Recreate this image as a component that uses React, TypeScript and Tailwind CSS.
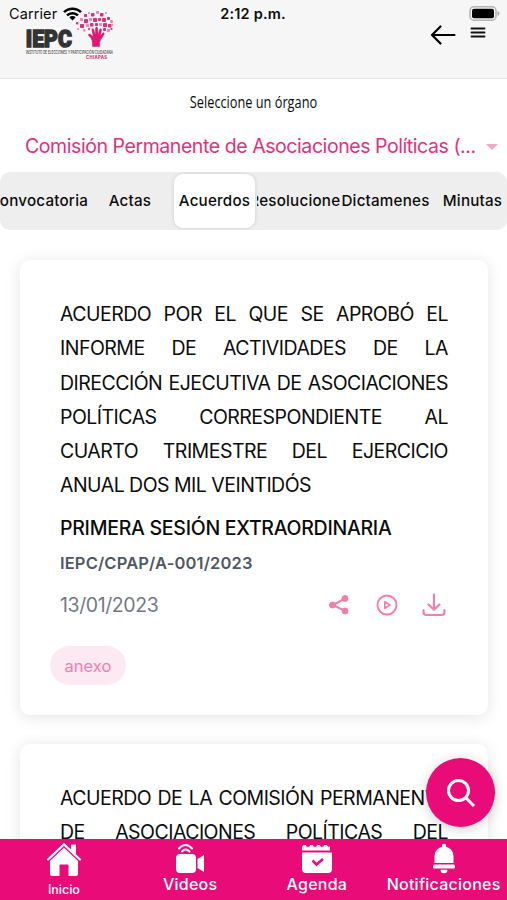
import type { ReactNode } from 'react'

const TABS = [
  { label: 'Convocatoria', className: 'justify-end' },
  { label: 'Actas', className: 'justify-center' },
  { label: 'Acuerdos', className: 'justify-center mx-[2px] rounded-[9px] bg-white shadow-[0_0_4px_rgba(0,0,0,0.14)]' },
  { label: 'Resoluciones', className: 'justify-center overflow-hidden' },
  { label: 'Dictamenes', className: 'justify-center' },
  { label: 'Minutas', className: 'justify-center' },
]

// Dots of the tree in the logo: x, y, size, light
const LEAVES: [number, number, number, boolean][] = [
  [8, 3, 3, false], [12, 1, 2, true], [15, 2, 3.5, false], [20, 0, 3, true], [24, 2, 3.5, false],
  [29, 1, 2, true], [4, 7, 3, true], [8, 8, 4, false], [13, 7, 3, true], [17, 7, 4, false],
  [22, 7, 3, false], [26, 7, 4, false], [31, 6, 3, false], [34, 9, 3, true], [0, 11, 2.5, false],
  [4, 13, 4, false], [10, 13, 3, true], [14, 12, 3.5, false], [19, 12, 3, false], [23, 12, 3, true],
  [27, 12, 4, false], [32, 13, 3.5, false], [35.5, 13, 1.8, true], [1, 17, 2, true], [7, 18, 2.5, true],
  [27, 17, 3, false], [31, 18, 3, true], [34.5, 17, 2, false], [12, 17, 2, false],
]

function Logo() {
  return (
    <svg width="92" height="50" viewBox="0 0 92 50" aria-label="IEPC Chiapas">
      <text x="1.800" y="36.800" fontFamily="Roboto, sans-serif" fontWeight="900" fontSize="24.500" textLength="46" lengthAdjust="spacingAndGlyphs" fill="#333" stroke="#333" strokeWidth="1.500">IEPC</text>
      <g transform="translate(52 1)">
        {LEAVES.map(([x, y, s, light], i) => (
          <rect key={i} x={x} y={y} width={s} height={s} rx="0.7" fill={light ? '#ee85b2' : '#dc3078'} />
        ))}
        <path d="M16.500 35.500c.3-5-.5-8-3.700-10.700-1.200-1.200.3-2.300 1.500-1.500l3 2.200-1.400-6.500c-.2-1.500 1.500-1.700 1.900-.3l1.600 5.400.2-7c.1-1.400 1.900-1.400 2 0l.5 6.900 1.500-5.500c.4-1.300 2-1 1.800.4l-.9 6.200 2-2.800c.9-1.100 2.200-.3 1.600.9-1.600 3.600-4.600 5.800-4.500 9.300v3z" fill="#dd1971" stroke="#dd1971" strokeWidth="0.500" />
      </g>
      <text x="2" y="43.500" fontFamily="Inter, sans-serif" fontSize="4.200" fontWeight="500" textLength="87" lengthAdjust="spacingAndGlyphs" fill="#444">INSTITUTO DE ELECCIONES Y PARTICIPACIÓN CIUDADANA</text>
      <text x="62" y="49" fontFamily="Inter, sans-serif" fontSize="4.200" fontWeight="800" textLength="21" fill="#dc3078">CHIAPAS</text>
    </svg>
  )
}

function Header() {
  return (
    <header className="h-[79px] shrink-0 border-b border-[#e4e4e4] bg-[#f6f6f6]">
      <div className="grid h-[27px] grid-cols-3 items-center pl-[9px] pr-[7px] text-[14.500px]">
        <div className="flex items-center gap-[6px] tracking-[0.1px]">
          Carrier
          <svg width="19" height="14" viewBox="0 0 19 14" fill="none" stroke="#000" strokeWidth="2.500">
            <path d="M1 5.200a12 12 0 0 1 17 0M4 8.400a7.800 7.800 0 0 1 11 0" />
            <path d="M9.500 13.500 6.300 10.300a4.600 4.600 0 0 1 6.400 0z" fill="#000" stroke="none" />
          </svg>
        </div>
        <span className="-ml-[3px] text-center font-semibold tracking-[0.2px]">2:12 p.m.</span>
        <svg className="justify-self-end" width="31" height="15" viewBox="0 0 31 15">
          <rect x="1" y="0.800" width="26" height="13.400" rx="4" fill="#f6f6f6" stroke="#b4b4b4" strokeWidth="1.600" />
          <rect x="3" y="2.800" width="22" height="9.400" rx="2" />
          <path d="M28.500 5v5c2.600-1 2.600-4 0-5z" fill="#aaa" />
        </svg>
      </div>
      <div className="-mt-[17px] flex items-start justify-between pl-6 pr-[21px]">
        <Logo />
        <div className="mt-[15px] flex items-start gap-[14px]">
          <svg width="26" height="20" viewBox="0 0 26 20" fill="none" stroke="#000" strokeWidth="2.200" strokeLinecap="round" strokeLinejoin="round">
            <path d="M24.500 10H2M10.500 1.500 2 10l8.500 8.500" />
          </svg>
          <svg width="16" height="14" viewBox="0 0 16 14" stroke="#111" strokeWidth="1.900" strokeLinecap="round">
            <path d="M1.500 3.500h13M1.500 7.500h13M1.500 11.500h13" />
          </svg>
        </div>
      </div>
    </header>
  )
}

function ShareIcon() {
  return (
    <svg width="22" height="22" viewBox="0 0 22 22" fill="#f17fae" stroke="#f17fae">
      <path d="M17 4.500 5 11l12 6" fill="none" strokeWidth="2" />
      <circle cx="17" cy="4.500" r="3" />
      <circle cx="4.500" cy="11" r="3" />
      <circle cx="17" cy="17" r="3" />
    </svg>
  )
}

function PlayIcon() {
  return (
    <svg width="22" height="22" viewBox="0 0 22 22" fill="none" stroke="#f17fae" strokeWidth="1.900" strokeLinejoin="round">
      <circle cx="11" cy="11" r="9.500" />
      <path d="M8.800 7.800v6.400L14 11z" strokeWidth="1.600" />
    </svg>
  )
}

function DownloadIcon() {
  return (
    <svg width="24" height="24" viewBox="0 0 24 24" fill="none" stroke="#f17fae" strokeWidth="2.200" strokeLinecap="round" strokeLinejoin="round">
      <path d="M12 1.500v15M6.500 11.500l5.500 5.300 5.500-5.300M1.500 17v2a3 3 0 0 0 3 3h15a3 3 0 0 0 3-3v-2" />
    </svg>
  )
}

function Card({ children }: { children: ReactNode }) {
  return (
    <article className="h-[455px] shrink-0 rounded-[10px] bg-white px-10 pt-[37px] shadow-[0_2px_16px_rgba(0,0,0,0.11)]">
      {children}
    </article>
  )
}

function NavItem({ label, small, children }: { label: string; small?: boolean; children: ReactNode }) {
  return (
    <div className={`flex flex-col items-center pt-1 ${small ? 'pl-px' : ''}`}>
      {children}
      <span className={small ? 'mt-[5px] text-[12.500px] leading-4 font-medium' : 'text-[16px] leading-[20px] font-medium tracking-[0.25px]'}>
        {label}
      </span>
    </div>
  )
}

export default function App() {
  return (
    <div className="relative flex h-[900px] w-[507px] flex-col overflow-hidden bg-white font-[Inter,sans-serif] text-[#0c0c0c]">
      <Header />

      <main className="flex min-h-0 flex-1 flex-col overflow-hidden">
        {/* Organ selector */}
        <p className="mt-[11px] h-6 scale-x-[0.75] text-center font-['Open_Sans',sans-serif] text-[17px] leading-6 font-medium whitespace-nowrap">
          Seleccione un órgano
        </p>
        <div className="mt-[18px] flex h-[30px] items-center justify-between pl-[25px] pr-[9px] text-[#e0317d]">
          <span className="text-[19.500px] tracking-[-0.430px] whitespace-nowrap">Comisión Permanente de Asociaciones Políticas (...</span>
          <svg width="12" height="6" viewBox="0 0 12 6" fill="#f3a6c6">
            <path d="M0 0h12L6 6z" />
          </svg>
        </div>

        {/* Tabs */}
        <div className="mt-[11px] flex h-[58px] shrink-0 overflow-hidden rounded-[10px] bg-[#eee]">
          <div className="my-0.5 grid w-[515px] shrink-0 grid-cols-[88px_84px_85px_84px_89px_85px]">
            {TABS.map(tab => (
              <div
                key={tab.label}
                className={`flex items-center text-[15.200px] font-medium tracking-[0.2px] whitespace-nowrap ${tab.className}`}
              >
                {tab.label}
              </div>
            ))}
          </div>
        </div>

        {/* Agreements */}
        <div className="flex flex-col gap-[29px] px-5 pt-[30px] pr-[19px]">
          <Card>
            <p className="text-justify text-[19.500px] leading-[34.200px] tracking-[-0.520px]">
              ACUERDO POR EL QUE SE APROBÓ EL INFORME DE ACTIVIDADES DE LA DIRECCIÓN EJECUTIVA DE ASOCIACIONES POLÍTICAS CORRESPONDIENTE AL CUARTO TRIMESTRE DEL EJERCICIO ANUAL DOS MIL VEINTIDÓS
            </p>
            <h2 className="mt-[11px] text-[19.500px] leading-[30px] font-medium tracking-[-0.270px] whitespace-nowrap">PRIMERA SESIÓN EXTRAORDINARIA</h2>
            <p className="mt-2 text-[16.500px] leading-6 font-semibold tracking-[0.150px] text-[#4f5865]">IEPC/CPAP/A-001/2023</p>
            <div className="mt-[15px] flex h-[30px] items-center justify-between pr-[2px]">
              <span className="text-[19.500px] tracking-[-0.400px] text-[#737984]">13/01/2023</span>
              <div className="flex items-center">
                <ShareIcon />
                <span className="ml-[26px] mr-6">
                  <PlayIcon />
                </span>
                <DownloadIcon />
              </div>
            </div>
            <span className="-ml-[10px] mt-[26px] flex h-[39px] w-[76px] items-center justify-center rounded-full bg-[#fde9f2] text-[16.500px] text-[#f17fae]">
              anexo
            </span>
          </Card>
          <Card>
            <p className="text-justify text-[19.500px] leading-[34.200px] tracking-[-0.520px]">
              ACUERDO DE LA COMISIÓN PERMANENTE DE ASOCIACIONES POLÍTICAS DEL INSTITUTO DE ELECCIONES
            </p>
          </Card>
        </div>
      </main>

      {/* Search button */}
      <button className="absolute right-[12px] top-[758px] flex size-[69px] items-center justify-center rounded-full bg-[#e90c78] shadow-[0_2px_12px_rgba(0,0,0,0.2)]">
        <svg width="30" height="30" viewBox="0 0 30 30" fill="none" stroke="#fff" strokeWidth="3">
          <circle cx="12.500" cy="12.500" r="10" />
          <path d="m19.500 19.500 8.500 8.500" />
        </svg>
      </button>

      <nav className="z-10 grid h-[61px] shrink-0 grid-cols-4 bg-[#e90c78] text-white">
        <NavItem label="Inicio" small>
          <svg width="36" height="34" viewBox="0 0 36 34" fill="#fff">
            <path d="M4 17.500 18 4l14 13.500V31a2 2 0 0 1-2 2h-7.500V22.500a1 1 0 0 0-1-1h-7a1 1 0 0 0-1 1V33H6a2 2 0 0 1-2-2z" />
            <path d="M2 16.500 18 1.500l16 15" fill="none" stroke="#e90c78" strokeWidth="4.500" />
            <path d="M25 1.500h5v10l-5-4.500z" />
            <path d="M2 16.500 18 1.500l16 15" fill="none" stroke="#fff" strokeWidth="2.300" strokeLinecap="round" />
          </svg>
        </NavItem>
        <NavItem label="Videos">
          <svg width="30" height="31" viewBox="0 0 30 31" fill="#fff">
            <rect x="1" y="11" width="20" height="19" rx="4" />
            <path d="m22.500 16 6.500-4v17l-6.500-4z" />
            <path d="M4 5.500c4-4.700 9-4.700 13 0M7 8.500c2.500-2.700 5-2.700 7.500 0" fill="none" stroke="#fff" strokeWidth="2" strokeLinecap="round" />
          </svg>
        </NavItem>
        <NavItem label="Agenda">
          <svg width="30" height="31" viewBox="0 0 30 31" fill="#fff">
            <path d="M0 7.500V5a3 3 0 0 1 3-3h1a2 2 0 0 0 4 0h3a2 2 0 0 0 4 0h3a2 2 0 0 0 4 0h3a2 2 0 0 0 3 1.500V7.500z" />
            <path d="M0 9.500h30V26a4 4 0 0 1-4 4H4a4 4 0 0 1-4-4z" />
            <path d="m10.500 17.500 4 4 6.500-5.500" fill="none" stroke="#e90c78" strokeWidth="2.500" />
          </svg>
        </NavItem>
        <NavItem label="Notificaciones">
          <svg width="24" height="31" viewBox="0 0 24 31" fill="#fff">
            <circle cx="12" cy="3" r="2.200" />
            <path d="M2.500 20v-7a9.500 9.500 0 0 1 19 0v7z" />
            <rect x="1" y="21.500" width="22" height="4" rx="1.500" />
            <path d="M8.500 26.800h7a3.500 3.500 0 0 1-7 0z" />
          </svg>
        </NavItem>
      </nav>
    </div>
  )
}
